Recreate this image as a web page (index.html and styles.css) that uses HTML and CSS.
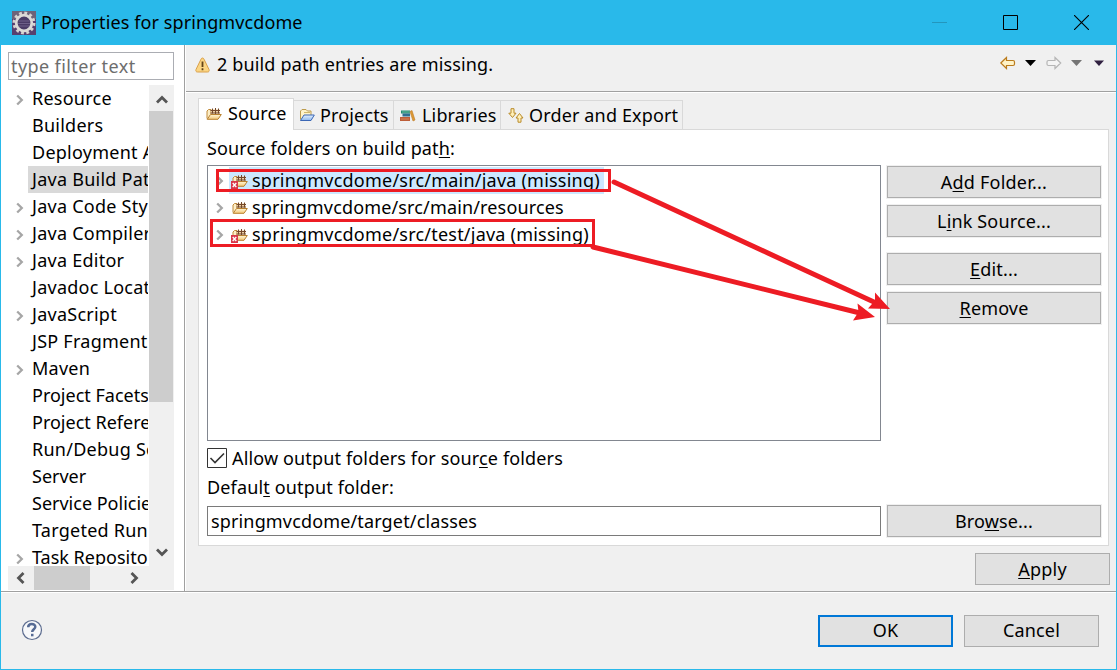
FILE: index.html
```html
<!DOCTYPE html>
<html lang="en">
<head>
<meta charset="utf-8">
<title>Properties for springmvcdome</title>
<link rel="stylesheet" href="styles.css">
</head>
<body>
<svg class="defs" width="0" height="0" aria-hidden="true">
  <defs>
    <linearGradient id="gold" x1="0" y1="0" x2="0" y2="1"><stop offset="0" stop-color="#fff6d8"/><stop offset="1" stop-color="#f3c877"/></linearGradient>
    <linearGradient id="blue" x1="0" y1="0" x2="0" y2="1"><stop offset="0" stop-color="#e4f0fc"/><stop offset="1" stop-color="#8db8ef"/></linearGradient>
    <symbol id="package" viewBox="0 0 16 14">
      <path d="M1 11.500V4L2.500 2.500H5V7" fill="#fdeec6" stroke="#c08a3a"/>
      <path d="M5.500 2.500h8v4h-8z" fill="#ecd0a4"/>
      <path d="M4.500 3.500h9.500M4.500 6h9.500M6.500 1.500v5M9.500 1v6M12.500 1.500v5" fill="none" stroke="#75482a"/>
      <path d="M1.200 12.300L4.500 7.500h10.800L12 12.300z" fill="url(#gold)" stroke="#b9812f"/>
    </symbol>
    <symbol id="error" viewBox="0 0 8 8"><path d="M0 0h7v8H0z" fill="#d9384a"/><path d="M1.700 2l3.600 4M5.300 2L1.700 6" stroke="#fff" stroke-width="1.300"/></symbol>
    <symbol id="chev" viewBox="0 0 8 12"><path d="M1.200 1.500L5.800 6 1.200 10.500" fill="none" stroke="#a6a6a6" stroke-width="2.300"/></symbol>
  </defs>
</svg>
<div class="window">
  <header class="titlebar">
    <svg class="app-icon" width="24" height="24" viewBox="0 0 24 24">
      <path d="M0 0h24v24H0z" fill="#57406f"/><path d="M0 0h24v8H0z" fill="#6e6379"/>
      <circle cx="12" cy="12" r="10" fill="none" stroke="#d6d3d0" stroke-width="3" stroke-dasharray="2.800 2.436"/>
      <circle cx="12" cy="12" r="7.800" fill="#4a3b66" stroke="#dcdad7" stroke-width="2.800"/>
      <path d="M6.500 10h11M6 12.500h12M6.500 15h11" stroke="#6e6089"/>
    </svg>
    <span class="title">Properties for springmvcdome</span>
    <div class="controls">
      <svg width="15" height="15"><path d="M0 7.500h15" stroke="#2396bd"/></svg>
      <svg width="15" height="15"><path d="M.5.5h14v14H.5z" fill="none" stroke="#000"/></svg>
      <svg width="15" height="15"><path d="M0 0l15 15M15 0L0 15" stroke="#000" stroke-width="1.100"/></svg>
    </div>
  </header>
  <main class="body">
    <aside class="side">
      <div class="filter">type filter text</div>
      <div class="tree">
        <ul class="nodes">
          <li><svg><use href="#chev"/></svg><span>Resource</span></li>
          <li class="leaf"><span>Builders</span></li>
          <li class="leaf"><span>Deployment Assembly</span></li>
          <li class="leaf selected"><span>Java Build Path</span></li>
          <li><svg><use href="#chev"/></svg><span>Java Code Style</span></li>
          <li><svg><use href="#chev"/></svg><span>Java Compiler</span></li>
          <li><svg><use href="#chev"/></svg><span>Java Editor</span></li>
          <li class="leaf"><span>Javadoc Location</span></li>
          <li><svg><use href="#chev"/></svg><span>JavaScript</span></li>
          <li class="leaf"><span>JSP Fragment</span></li>
          <li><svg><use href="#chev"/></svg><span>Maven</span></li>
          <li class="leaf"><span class="tight">Project Facets</span></li>
          <li class="leaf"><span class="tight">Project References</span></li>
          <li class="leaf"><span>Run/Debug Settings</span></li>
          <li class="leaf"><span class="tight">Server</span></li>
          <li class="leaf"><span class="tight">Service Policies</span></li>
          <li class="leaf"><span>Targeted Runtimes</span></li>
          <li><svg><use href="#chev"/></svg><span class="tight">Task Repository</span></li>
        </ul>
        <div class="vscroll">
          <svg width="12" height="9"><path d="M1 7.500L6 2.500 11 7.500" fill="none" stroke="#555" stroke-width="2.800"/></svg>
          <i class="vthumb"></i>
          <svg width="12" height="9"><path d="M1 1.500L6 6.500 11 1.500" fill="none" stroke="#555" stroke-width="2.800"/></svg>
        </div>
      </div>
      <div class="hscroll">
        <svg width="9" height="12"><path d="M7.500 1L2.500 6 7.500 11" fill="none" stroke="#555" stroke-width="2.800"/></svg>
        <i class="hthumb"></i>
        <svg class="right" width="9" height="12"><path d="M1.500 1L6.500 6 1.500 11" fill="none" stroke="#555" stroke-width="2.800"/></svg>
      </div>
    </aside>
    <section class="page">
      <div class="message">
        <svg width="15" height="16" viewBox="0 0 15 16"><path d="M7.500 1C8.300 1 8.700 1.600 9 2.200L14 12.500C14.500 14 14 15 12.500 15H2.500C1 15 .5 14 1 12.500L6 2.200C6.300 1.600 6.700 1 7.500 1z" fill="#fbd583" stroke="#d9a04a"/><path d="M7.500 4.500v5.500M7.500 11.300v2" stroke="#624318" stroke-width="1.800"/></svg>
        <span class="msg">2 build path entries are missing.</span>
        <svg class="nav" width="104" height="14" viewBox="0 0 104 14">
          <path d="M.8 7L6.500 1.500v3H13q1.500 0 1.500 1.500v2q0 1.500-1.500 1.500H6.500v3z" fill="#fff3c7" stroke="#bb7b1c" stroke-width="1.200"/>
          <path d="M25 4h11l-5.500 6z" fill="#000"/>
          <path d="M60.700 7L55 1.500v3H48.500q-1.500 0-1.500 1.500v2q0 1.500 1.500 1.500H55v3z" fill="#f4f4f4" stroke="#b5b5b5" stroke-width="1.200"/>
          <path d="M71 4h11l-5.500 6z" fill="#757575"/>
          <path d="M94 4.500h10l-5 5.500z" fill="#302040"/>
        </svg>
      </div>
      <div class="content">
        <nav class="tabs">
          <div class="tab active"><svg width="16" height="14"><use href="#package"/></svg><span>Source</span></div>
          <div class="tab projects"><svg width="16" height="14" viewBox="0 0 16 14"><path d="M1.500 11.500V3L3 1.500h4L8.500 3H12v4" fill="#fff3c9" stroke="#bc9b4d"/><path d="M5 4.500h6" stroke="#d0b86d"/><path d="M1.500 12.500L5 7h10.300L12 12.500z" fill="url(#blue)" stroke="#3b67b5"/></svg><span>Projects</span></div>
          <div class="tab libraries"><svg width="16" height="14" viewBox="0 0 16 14"><path d="M1 2.500h9v3H1z" fill="#228b73"/><path d="M2 4h8" stroke="#6dbba0"/><path d="M2.500 5.500H10v3H2.500z" fill="#316f91"/><path d="M0 9h10v4H0z" fill="#bd5e38"/><path d="M1 11h8" stroke="#d88556"/><path d="M10 3.500l2-1 3 9.500-2 1z" fill="#dd9a33" stroke="#c07a28" stroke-width=".6"/></svg><span>Libraries</span></div>
          <div class="tab order"><svg width="16" height="15" viewBox="0 0 16 15"><path d="M3 .7h3v4.500h2L4.500 9.500.8 5.200H3z" fill="#fff0ba" stroke="#b98a29"/><path d="M10 14.200h3V10h2L11.500 5.500 8 10h2z" fill="#fff0ba" stroke="#b98a29"/></svg><span>Order and Export</span></div>
        </nav>
        <div class="panel">
          <div class="label source-label">Source folders on build pat<u>h</u>:</div>
          <div class="folders">
            <div class="list">
              <div class="entry"><svg class="chev"><use href="#chev"/></svg><div class="item chosen"><svg width="17" height="16"><use href="#package" x="1" y="1" width="16" height="14"/><use href="#error" y="8" width="8" height="8"/></svg><span class="wide">springmvcdome/src/main/java (missing)</span></div></div>
              <div class="entry"><svg class="chev"><use href="#chev"/></svg><div class="item"><svg width="17" height="16"><use href="#package" x="1" y="1" width="16" height="14"/></svg><span>springmvcdome/src/main/resources</span></div></div>
              <div class="entry"><svg class="chev"><use href="#chev"/></svg><div class="item"><svg width="17" height="16"><use href="#package" x="1" y="1" width="16" height="14"/><use href="#error" y="8" width="8" height="8"/></svg><span class="wide">springmvcdome/src/test/java (missing)</span></div></div>
            </div>
            <div class="actions">
              <button class="wide">A<u>d</u>d Folder...</button>
              <button>L<u>i</u>nk Source...</button>
              <button class="edit"><u>E</u>dit...</button>
              <button>
                <u>R</u>emove</button>
            </div>
          </div>
          <div class="allow"><svg width="20" height="20"><path d="M.5.500h19v19H.5z" fill="#fff" stroke="#333"/><path d="M3.500 10l4.500 4.500L17 5.500" fill="none" stroke="#333" stroke-width="1.600"/></svg><span>Allow output folders for sour<u>c</u>e folders</span></div>
          <div class="label output-label">Defaul<u>t</u> output folder:</div>
          <div class="output"><div class="field">springmvcdome/target/classes</div><button>Bro<u>w</u>se...</button></div>
        </div>
        <div class="apply"><button class="wide"><u>A</u>pply</button></div>
      </div>
    </section>
  </main>
  <footer class="footer">
    <svg class="help" width="22" height="22" viewBox="0 0 22 22"><circle cx="11" cy="11" r="9.500" fill="#f7f8fa" stroke="#5c6c8f" stroke-width="1.200"/><path d="M7.200 8.200C7.200 3.800 14.500 4 14.300 8c-.2 2.200-3.100 2.400-3.100 5" fill="none" stroke="#566b95" stroke-width="2.500"/><path d="M10 14.800h2.500v2.500H10z" fill="#566b95"/></svg>
    <div class="dialog-buttons"><button class="primary">OK</button><button>Cancel</button></div>
  </footer>
  <svg class="marks" width="1117" height="670">
    <g fill="none" stroke="#ed1c24" stroke-width="3"><path d="M217.500 170.500h392v20h-392zM211.500 220.500h382v25h-382z"/><path d="M614 182L875 302.500M593 247L860 313" stroke-width="5" stroke-linecap="round"/></g>
    <path d="M890 309L875 292.500v8L868 308.500zM875 317L857.500 303.500l1 8.500L853 320.500z" fill="#ed1c24"/>
  </svg>
</div>
</body>
</html>
```
FILE: styles.css
```css
* { box-sizing: border-box; }
body { margin: 0; overflow: hidden; font: 18px/27px "Noto Sans", "Open Sans", sans-serif; letter-spacing: .15px; color: #000; }
.defs { position: absolute; }
.window { position: relative; width: 1117px; height: 670px; display: flex; flex-direction: column; background: #f0f0f0; border: solid #29b9ea; border-width: 0 1px 1px; }
svg { flex: none; display: block; }
span, .label { white-space: nowrap; }
u { text-decoration: underline 1px; text-underline-offset: 2px; text-decoration-skip-ink: none; }
.wide { letter-spacing: .22px; }
.titlebar { height: 45px; flex: none; display: flex; align-items: center; gap: 5px; padding: 0 27px 0 11px; background: #29b9ea; }
.title { letter-spacing: .1px; }
.controls { margin-left: auto; display: flex; gap: 56px; }
.body { height: 547px; flex: none; display: flex; border-bottom: 1px solid #a0a0a0; }
.side { width: 184px; flex: none; padding: 7px 10px 0 7px; background: #fff; border-right: 1px solid #a0a0a0; }
.filter { height: 28px; margin-bottom: 5px; padding: 0 2px; border: 1px solid #abadb3; color: #6d6d6d; letter-spacing: .4px; }
.tree { height: 481px; display: flex; overflow: hidden; }
.nodes { width: 141px; height: 480px; margin: 0; padding: 0; overflow: hidden; list-style: none; }
.nodes li { height: 27px; display: flex; align-items: center; padding: 0 1px 0 8px; }
.nodes li svg { width: 8px; height: 12px; margin-top: 2px; }
.nodes span { flex: 1; padding-left: 4px; margin-left: 4px; overflow: hidden; letter-spacing: .25px; }
.nodes .tight { letter-spacing: 0; }
.nodes .leaf { padding-left: 16px; }
.nodes .selected span { background: #d9d9d9; }
.vscroll { width: 25px; display: flex; flex-direction: column; align-items: center; background: #f0f0f0; padding: 10px 0 9px; }
.vthumb { width: 24px; height: 291px; background: #cdcdcd; margin: 7px 1px 0 0; }
.vscroll svg:last-child { margin-top: auto; }
.hscroll { height: 24px; display: flex; align-items: center; background: #f0f0f0; padding-left: 8px; }
.hthumb { width: 56px; height: 24px; margin: 0 40px 0 9px; background: #cdcdcd; }
.page { flex: 1; border-left: 1px solid #fff; min-width: 0; }
.message { height: 48px; display: flex; align-items: center; gap: 7px; padding: 0 12px 8px 9px; border-bottom: 1px solid #fff; box-shadow: inset 0 -1px #a0a0a0; }
.nav { margin: -3px 0 0 auto; }
.content { padding: 5px 6px 0 12px; }
.tabs { height: 32px; display: flex; align-items: flex-end; }
.tab { height: 30px; display: flex; align-items: center; gap: 5px; border: 1px solid #d9d9d9; border-left: 0; padding-left: 5px; background: #f0f0f0; }
.tab.active { position: relative; z-index: 1; width: 96px; height: 32px; gap: 6px; background: #fff; border-left: 1px solid #d9d9d9; border-bottom: 0; padding: 0 0 2px 7px; }
.projects { width: 100px; }
.libraries { width: 107px; gap: 6px; padding-left: 6px; }
.order { width: 182px; padding-left: 7px; }
.panel { width: 911px; height: 417px; margin-top: -1px; padding: 5px 7px 0 8px; background: #fff; border: 1px solid #d9d9d9; }
.label { height: 27px; }
.folders { display: flex; gap: 6px; height: 276px; margin-top: 3px; }
.list { width: 674px; border: 1px solid #828790; padding-top: 1px; }
.entry { height: 27px; display: flex; align-items: center; padding-left: 8px; }
.entry .chev { width: 8px; height: 12px; margin-right: 5px; }
.item { height: 27px; display: flex; align-items: center; gap: 4px; padding: 0 4px 0 2px; }
.chosen { width: 375px; background: #cce8ff; }
.actions { display: flex; flex-direction: column; gap: 7px; padding-top: 1px; }
button { height: 32px; width: 214px; padding: 0; border: 1px solid #adadad; background: #e1e1e1; font: inherit; color: #000; box-shadow: 0 0 0 1px #f0f0f0; }
button:not(.wide) { letter-spacing: .15px; }
.edit { margin-top: 9px; }
.allow { height: 27px; margin-top: 4px; display: flex; align-items: center; gap: 5px; }
.allow svg { margin-top: -1px; }
.output-label { margin-top: 2px; }
.output { display: flex; gap: 6px; align-items: center; margin-top: 4px; }
.field { width: 674px; height: 30px; border: 1px solid #7a7a7a; padding: 1px 0 0 3px; }
.apply { display: flex; justify-content: flex-end; margin: 7px 0 0; }
.apply button, .footer button { width: 135px; }
.footer { flex: 1; display: flex; align-items: center; justify-content: space-between; padding: 0 17px 1px 20px; border-top: 1px solid #fff; }
.help { margin-bottom: 2px; }
.dialog-buttons { display: flex; gap: 11px; }
.footer .primary { border: 2px solid #0078d7; }
.marks { position: absolute; left: -1px; top: 0; pointer-events: none; }
```
